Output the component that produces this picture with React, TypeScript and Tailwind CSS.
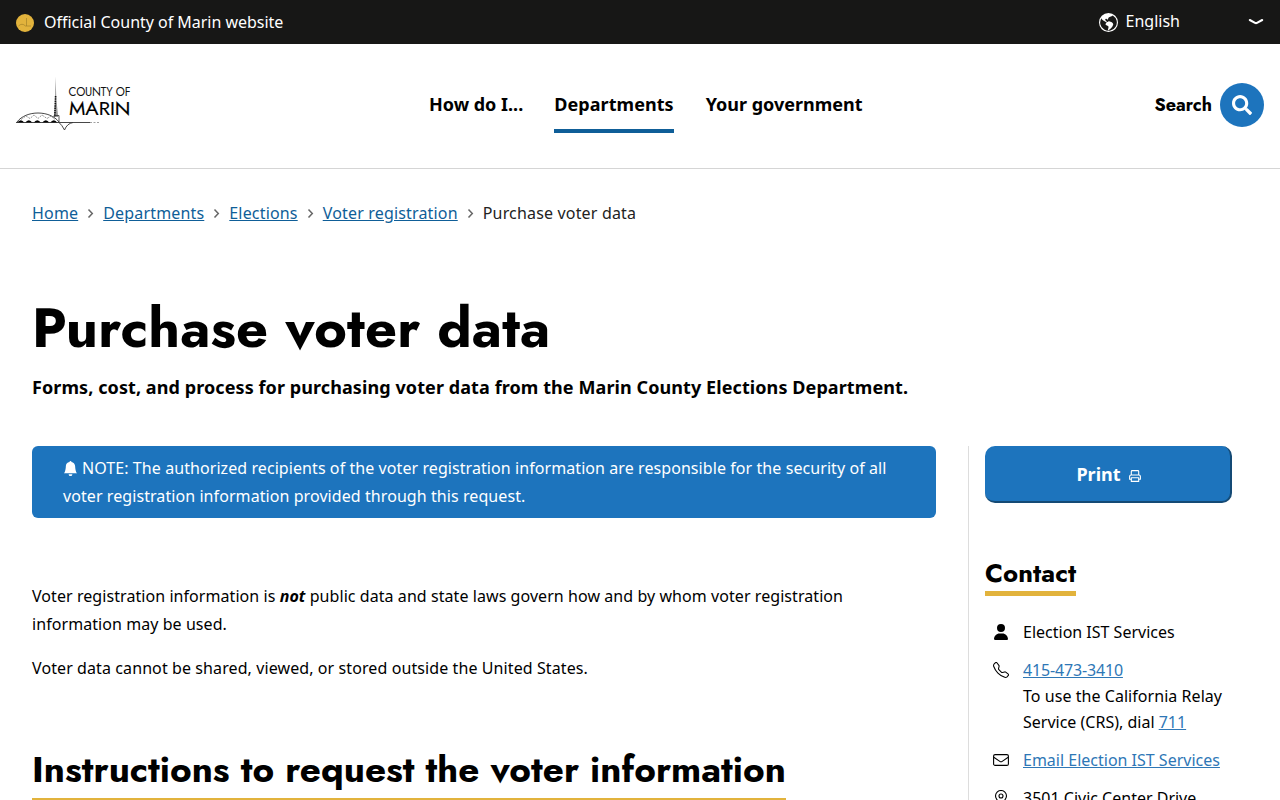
import { Fragment } from "react";
import { BsBellFill, BsGlobeAmericas, BsTelephone } from "react-icons/bs";
import { FaUser } from "react-icons/fa6";
import { FaSearch } from "react-icons/fa";

const headingFont = "font-['Jost','Lato',sans-serif]";

const navItems = [
  { label: "How do I...", active: false },
  { label: "Departments", active: true },
  { label: "Your government", active: false }
];

const breadcrumbs = ["Home", "Departments", "Elections", "Voter registration"];

function CountyLogo() {
  return (
    <svg width="120" height="58" viewBox="0 0 120 58" aria-label="County of Marin" className="block">
      {/* spire */}
      <path d="M39.5 0.5 L39 24 L38 41 H42.2 L40.4 24 Z" fill="#999" />
      <path d="M39.6 20 L38.8 41" stroke="#111" strokeWidth="1.6" strokeDasharray="1.5 0.8" />
      <path d="M38 41 V39.5 H43 V46" fill="none" stroke="#333" strokeWidth="0.8" />
      {/* dome and arches */}
      <path d="M1 46 C10 34 34 34 43 46" fill="none" stroke="#333" strokeWidth="0.9" />
      <path
        d="M5 43.500 L10 40 L14 42.500 L18 39 L22 42.500 L26 39 L31 42.500 L35 40 L39 43.500"
        fill="none"
        stroke="#666"
        strokeWidth="0.7"
        strokeDasharray="2 1"
      />
      {[1, 9, 17.5, 26, 34].map((x) => (
        <path key={x} d={`M${x} 47 q3.800 -5.500 7.600 0 z`} fill="#000" />
      ))}
      <path d="M0 46.500 H74" stroke="#333" strokeWidth="0.9" />
      <path d="M74 46.500 H83" stroke="#888" strokeWidth="0.8" strokeDasharray="2 1.500" />
      <path d="M43 46.500 Q46 49 48.500 54 Q51 47.500 57 46.500" fill="none" stroke="#333" strokeWidth="0.9" />
      <text x="52.500" y="20" fontFamily="Jost, Lato, sans-serif" fontSize="11.500" textLength="62" fill="#111">
        COUNTY OF
      </text>
      <text x="53" y="38.500" fontFamily="Jost, Lato, sans-serif" fontSize="19.500" textLength="61.500" lengthAdjust="spacingAndGlyphs" fill="#000" stroke="#000" strokeWidth="0.15">
        MARIN
      </text>
    </svg>
  );
}

function PrintIcon() {
  return (
    <svg width="12" height="12" viewBox="0 0 12 12" className="mt-1" fill="none" stroke="currentColor" strokeWidth="1.1" strokeLinejoin="round">
      <path d="M2.300 5 V1.500 Q2.300 0.600 3.200 0.600 H8.800 Q9.700 0.600 9.700 1.500 V5" />
      <path d="M2.300 9.300 H0.600 V6.500 Q0.600 5 2.100 5 H9.900 Q11.400 5 11.400 6.500 V9.300 H9.700" />
      <path d="M2.300 7.800 H9.700 V11.400 H2.300 Z" />
    </svg>
  );
}

function EnvelopeIcon() {
  return (
    <svg width="16" height="16" viewBox="0 0 16 16" className="mt-[5px] shrink-0" fill="none" stroke="currentColor" strokeWidth="1.1">
      <rect x="0.600" y="2.600" width="14.800" height="10.800" rx="1.500" />
      <path d="M0.800 5.300 L6.800 9.400 Q8 10.200 9.200 9.400 L15.200 5.300" />
    </svg>
  );
}

function LocationIcon() {
  return (
    <svg width="16" height="16" viewBox="0 0 16 16" className="mt-[5px] shrink-0" fill="none" stroke="currentColor" strokeWidth="1.1">
      <path d="M8 15.300 C5 11.500 2.500 8.500 2.500 6 A5.500 5.500 0 0 1 13.500 6 C13.500 8.500 11 11.500 8 15.300 Z" />
      <circle cx="8" cy="6" r="2" />
    </svg>
  );
}

function TopBar() {
  return (
    <div className="flex h-11 items-center justify-between bg-[#171716] px-4 text-white">
      <div className="flex items-center">
        <svg width="18" height="18" viewBox="0 0 18 18" className="mt-0.5">
          <circle cx="9" cy="9" r="9" fill="#e2b33c" />
          <path d="M2.500 12 Q6 8.500 9.500 12 H15 M10.500 4 V12" fill="none" stroke="#9b7a25" strokeWidth="0.6" />
        </svg>
        <span className="ml-2.5 tracking-[-0.02px]">Official County of Marin website</span>
      </div>
      <div className="flex items-center">
        <BsGlobeAmericas className="h-[19px] w-[19px]" />
        <span className="-mt-1 ml-2 h-[19px] overflow-hidden leading-[21px]">English</span>
        <svg width="16" height="8" viewBox="0 0 16 8" className="ml-[68px]">
          <path d="M1.800 2 L7 4.900 Q8 5.400 9 4.900 L14.200 2" fill="none" stroke="#fff" strokeWidth="2.100" strokeLinecap="round" />
        </svg>
      </div>
    </div>
  );
}

function Header() {
  return (
    <header className="flex h-[125px] items-center justify-between border-b border-[#d5d5d5] px-4">
      <div className="-mt-0.5 w-[413px]">
        <CountyLogo />
      </div>
      <nav className="flex flex-1 gap-8 pt-[11px] text-lg font-bold leading-7">
        {navItems.map((item) => (
          <a
            key={item.label}
            href="#"
            className={
              item.active
                ? "-ml-px whitespace-nowrap border-b-4 border-[#0f5e98] pb-[11px] tracking-[0.06px]"
                : "whitespace-nowrap border-b-4 border-transparent pb-[11px]"
            }
          >
            {item.label}
          </a>
        ))}
      </nav>
      <div className="-mt-0.5 flex items-center gap-2">
        <span className={`${headingFont} text-lg font-bold`}>Search</span>
        <button type="button" aria-label="Search" className="flex h-11 w-11 items-center justify-center rounded-full bg-[#1d74bd] text-white">
          <FaSearch size={20} />
        </button>
      </div>
    </header>
  );
}

function Sidebar() {
  return (
    <aside className="ml-8 h-[500px] w-[264px] border-l border-[#ddd] pl-4">
      <button
        type="button"
        className="flex h-[57px] w-full items-center justify-center gap-2 rounded-[10px] border-b-2 border-r-2 border-[#144a75] bg-[#1d74bd] pl-0.5 text-lg font-bold text-white"
      >
        Print <PrintIcon />
      </button>

      <h2 className={`${headingFont} mt-[53px] w-fit border-b-[5px] border-[#e2b33c] text-[25.6px] font-bold leading-[35px] tracking-[0.1px]`}>
        Contact
      </h2>

      <ul className="mt-[23px] space-y-3 pl-2 leading-[26px]">
        <li className="flex">
          <FaUser size={16} className="mt-[5px] w-4 shrink-0" />
          <span className="ml-3.5">Election IST Services</span>
        </li>
        <li className="flex">
          <BsTelephone size={16} className="mt-[5px] shrink-0" />
          <div className="ml-3.5 whitespace-nowrap">
            <a href="#" className="tracking-[-0.16px] text-[#2e77b6] underline">415-473-3410</a>
            <br />
            <span className="tracking-[0.05px]">To use the California Relay</span>
            <br />
            Service (CRS), dial <a href="#" className="text-[#2e77b6] underline">711</a>
          </div>
        </li>
        <li className="flex">
          <EnvelopeIcon />
          <a href="#" className="ml-3.5 whitespace-nowrap text-[#2e77b6] underline">Email Election IST Services</a>
        </li>
        <li className="flex">
          <LocationIcon />
          <span className="ml-3.5">3501 Civic Center Drive</span>
        </li>
      </ul>
    </aside>
  );
}

export default function App() {
  return (
    <div className="h-[800px] w-[1280px] overflow-hidden bg-white font-['Noto_Sans',sans-serif] text-base text-black">
      <TopBar />
      <Header />

      <main className="px-8">
        <nav className="mt-8 flex h-6 items-center tracking-[0.17px]">
          {breadcrumbs.map((crumb) => (
            <Fragment key={crumb}>
              <a href="#" className="text-[#0f5e98] underline">{crumb}</a>
              <svg width="25" height="10" viewBox="0 0 25 10">
                <path d="M10.500 1.500 L14.300 5.500 L10.500 9.500" fill="none" stroke="#666" strokeWidth="1.500" />
              </svg>
            </Fragment>
          ))}
          <span className="text-[#222]">Purchase voter data</span>
        </nav>

        <h1 className={`${headingFont} mt-[68px] whitespace-nowrap text-[56px] font-bold leading-[70px] tracking-[0.1px]`}>
          Purchase voter data
        </h1>
        <p className="mt-[10px] text-lg font-bold leading-7 tracking-[0.085px]">
          Forms, cost, and process for purchasing voter data from the Marin County Elections Department.
        </p>

        <div className="mt-[45px] flex">
          <div className="w-[904px] leading-7 tracking-[0.075px]">
            <div className="rounded-md bg-[#1d74bd] px-[31px] py-2 text-white">
              <BsBellFill size={15} className="mr-1 inline-block align-[-2px]" />
              NOTE: The authorized recipients of the voter registration information are responsible for the security of all
              voter registration information provided through this request.
            </div>
            <p className="mt-16 w-[840px] tracking-[0.065px]">
              Voter registration information is <strong><em>not</em></strong> public data and state laws govern how and by whom voter registration
              information may be used.
            </p>
            <p className="mt-4 tracking-[0.095px]">Voter data cannot be shared, viewed, or stored outside the United States.</p>
            <h2 className={`${headingFont} mt-[59px] w-fit whitespace-nowrap border-b-[5px] border-[#e2b33c] text-[36.8px] font-bold leading-[57px] tracking-[0.025px]`}>
              Instructions to request the voter information
            </h2>
          </div>
          <Sidebar />
        </div>
      </main>
    </div>
  );
}
